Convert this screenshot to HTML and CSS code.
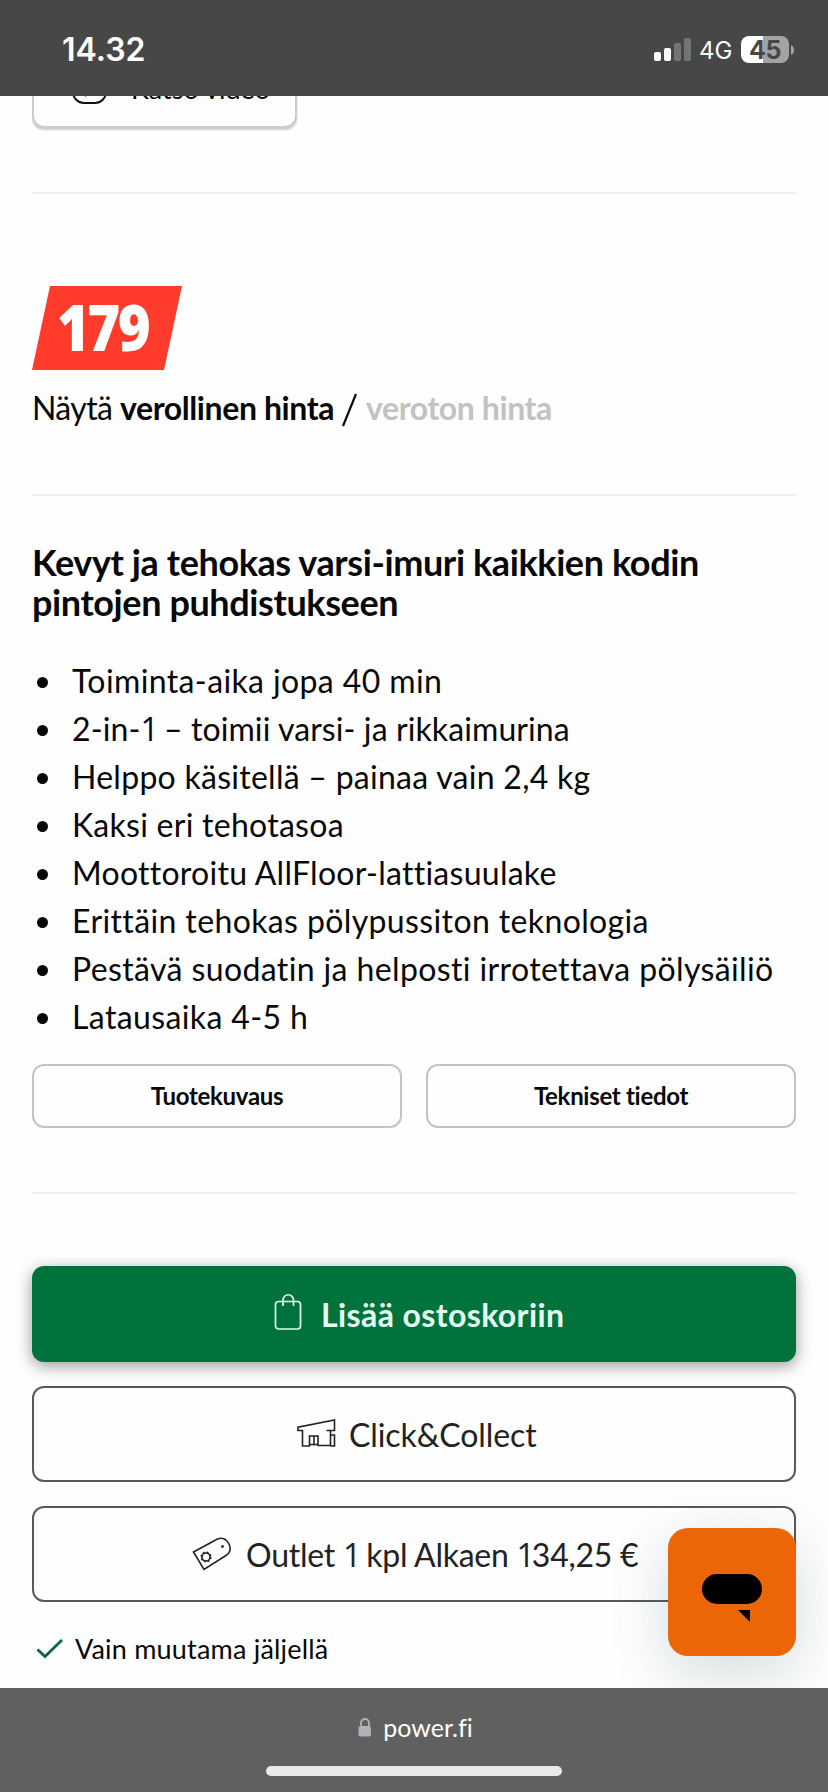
FILE: index.html
```html
<!DOCTYPE html>
<html lang="fi">
<head>
<meta charset="utf-8">
<title>power.fi</title>
<link rel="stylesheet" href="styles.css">
</head>
<body>
<div class="screen">
  <header class="status">
    <span class="time">14.32</span>
    <div class="indicators">
      <svg class="signal" width="37" height="23" viewBox="0 0 37 23"><rect x="0" y="14" width="7" height="9" rx="2" fill="#fff"/><rect x="10" y="10" width="7" height="13" rx="2" fill="#fff"/><rect x="20" y="5" width="7" height="18" rx="2" fill="#737373"/><rect x="30" y="0" width="7" height="23" rx="2" fill="#737373"/></svg>
      <span class="network">4G</span>
      <span class="battery">45</span>
      <svg class="nub" width="3" height="10" viewBox="0 0 3 10"><path d="M0 0Q3 1.5 3 5T0 10Z" fill="#a3a3a3"/></svg>
    </div>
  </header>

  <main class="page">
    <div class="video-clip">
      <button class="video">
        <svg width="36" height="36" viewBox="0 0 36 36" fill="none" stroke="#111" stroke-width="2"><rect x="1" y="1" width="33" height="34" rx="11"/><path d="M14 9v18l11-9z"/></svg>
        <span>Katso video</span>
      </button>
    </div>
    <hr class="rule">
    <section class="price-block">
      <div class="price"><span>179</span></div>
      <p class="tax"><span class="show">Näytä</span><b class="with-tax">verollinen hinta</b><svg width="15" height="34" viewBox="0 0 15 34"><path d="M1 33L14 1" stroke="#080808" stroke-width="2.200"/></svg><b class="no-tax">veroton hinta</b></p>
    </section>
    <hr class="rule">
    <section class="info">
      <h2>Kevyt ja tehokas varsi-imuri kaikkien kodin<br>pintojen puhdistukseen</h2>
      <ul class="features">
        <li><span>Toiminta-aika jopa 40 min</span></li>
        <li class="tightest"><span>2-in-<i class="one">1</i> – toimii varsi- ja rikkaimurina</span></li>
        <li class="tight"><span>Helppo käsitellä – painaa vain 2,4 kg</span></li>
        <li class="tight"><span>Kaksi eri tehotasoa</span></li>
        <li class="tight"><span>Moottoroitu AllFloor-lattiasuulake</span></li>
        <li><span>Erittäin tehokas pölypussiton teknologia</span></li>
        <li><span>Pestävä suodatin ja helposti irrotettava pölysäiliö</span></li>
        <li><span>Latausaika 4-5 h</span></li>
      </ul>
      <div class="tabs"><button>Tuotekuvaus</button><button>Tekniset tiedot</button></div>
    </section>
    <hr class="rule">
    <section class="buy">
      <button class="action cart">
        <svg width="28" height="38" viewBox="0 0 28 38" fill="none" stroke="#dffff0" stroke-width="1.7"><rect x="1.5" y="8.5" width="25" height="27.500" rx="3"/><path d="M9 13V7a5 5 0 0 1 10.500 0v6"/></svg>
        <span>Lisää ostoskoriin</span>
      </button>
      <button class="action collect">
        <svg width="40" height="30" viewBox="0 0 40 30" fill="none" stroke="#222" stroke-width="1.6"><path d="M29.500 12.500h8V2L1 9.200v3.300h4.500V28h7V18h8.500v9.500H33.500V12.500M33.500 17h4v11h-4M17 18v9.500M12.500 26.500h8.500"/></svg>
        <span>Click&amp;Collect</span>
      </button>
      <button class="action outlet">
        <svg width="40" height="36" viewBox="0 0 40 36" fill="none" stroke="#222" stroke-width="1.6"><path d="M1.500 16L25 3.200C30.500 .8 35 3.500 37 8S38 17 34 19.500L12 33.500z"/><circle cx="14" cy="21" r="4"/><circle cx="14" cy="21" r="4.800" stroke-dasharray="1.900 1.870"/><circle cx="30.500" cy="10.500" r="1" fill="#222" stroke-width="1"/></svg>
        <span>Outlet <i class="one">1</i> kpl Alkaen <i class="one">1</i>34,25 €</span>
      </button>
      <p class="stock"><svg width="28" height="22" viewBox="0 0 28 22" fill="none" stroke="#08693f" stroke-width="2.800"><path d="M1.500 11.500l7.500 7L26 2"/></svg><span>Vain muutama jäljellä</span></p>
    </section>
  </main>

  <footer class="browser">
    <div class="address">
      <svg width="14" height="19" viewBox="0 0 14 19"><path d="M3 9V5a4 4 0 0 1 8 0v4" fill="none" stroke="#b1b1b9" stroke-width="1.800"/><rect x="0.500" y="8" width="12.500" height="10.500" rx="2" fill="#b1b1b9"/></svg>
      <span>power.fi</span>
    </div>
    <div class="home"></div>
  </footer>

  <button class="chat"><svg width="60" height="49" viewBox="0 0 60 49"><rect width="60" height="30" rx="15"/><path d="M36 36h12v12z"/></svg></button>
</div>
</body>
</html>
```
FILE: styles.css
```css
* { box-sizing: border-box; }
body { margin: 0; background: #fefefe; font-family: Lato, "Open Sans", sans-serif; color: #080808; font-variant-ligatures: none; }
button { font: inherit; color: inherit; margin: 0; padding: 0; background: #fefefe; font-variant-ligatures: none; }
svg { display: block; flex: none; }
p, h2, ul { margin: 0; padding: 0; white-space: nowrap; }
.screen { position: relative; width: 828px; height: 1792px; overflow: hidden; display: flex; flex-direction: column; background: #fefefe; }
.one { font-family: "Open Sans", sans-serif; font-style: normal; font-weight: 400; letter-spacing: -3px; }

.status { height: 96px; flex: none; background: #474747; color: #fff; font-family: Inter, sans-serif; display: flex; justify-content: space-between; padding: 0 34px 0 62px; }
.time { font-size: 32px; font-weight: 600; line-height: 40px; margin-top: 30px; letter-spacing: 0; }
.indicators { display: flex; align-items: center; height: 99px; }
.signal { margin-right: 8px; }
.network { width: 34px; margin-right: 8px; font-size: 24px; line-height: 30px; margin-top: 2px; }
.battery { width: 48px; height: 27px; border-radius: 8px; background: linear-gradient(90deg, #fff 22px, #a3a3a3 22px); color: #474747; font-size: 25px; font-weight: 700; line-height: 28px; text-align: center; letter-spacing: -0.5px; }
.nub { margin-left: 2px; }

.page { height: 1592px; flex: none; padding: 0 32px; }
.rule { border: 0; height: 2px; margin: 0; background: #f0f0f0; }

.video-clip { height: 96px; overflow: hidden; }
.video { display: flex; align-items: center; width: 265px; height: 96px; margin-top: -64px; padding-left: 38px; gap: 23px; border: 2px solid #ccc; border-radius: 12px; box-shadow: 0 2px 2px #ccc; font-size: 27px; }
.video svg { margin-top: 12px; }
.video span { margin-top: 16px; }

.price-block { height: 300px; padding-top: 92px; }
.price { width: 150px; height: 84px; background: #ff3b2b; clip-path: polygon(18px 0, 100% 0, 132px 100%, 0 100%); color: #fff; font-family: "Open Sans", sans-serif; font-size: 64px; font-weight: 800; line-height: 81px; padding-left: 25px; letter-spacing: -3px; }
.price span { display: inline-block; transform: scaleX(.88); transform-origin: left; }
.tax { display: flex; align-items: center; height: 40px; margin-top: 18px; font-size: 32px; line-height: 40px; }
.tax b { font-weight: 700; letter-spacing: -0.4px; }
.show { width: 88px; letter-spacing: -0.6px; }
.with-tax { width: 222px; }
.tax svg { margin: 3px 9px 0 0; }
.tax .no-tax { color: #c2c2c2; }

.info { height: 696px; padding-top: 46px; }
h2 { font-size: 36px; line-height: 40px; font-weight: 700; letter-spacing: -0.4px; }
.features { list-style: none; margin-top: 35px; font-size: 32px; line-height: 48px; letter-spacing: 0.38px; }
.features .tight { letter-spacing: 0.27px; }
.features .tightest { letter-spacing: 0.1px; }
.features li { display: flex; align-items: center; height: 48px; }
.features li::before { content: ""; width: 11px; height: 11px; margin: 3px 24px 0 5px; border-radius: 50%; background: #080808; }
.tabs { display: grid; grid-template-columns: 1fr 1fr; gap: 24px; margin-top: 23px; }
.tabs button { height: 64px; border: 2px solid #c3c3c3; border-radius: 12px; font-size: 24px; font-weight: 700; letter-spacing: -0.3px; padding-bottom: 2px; }

.buy { padding-top: 72px; }
.action { display: flex; align-items: center; width: 100%; height: 96px; margin-bottom: 24px; border: 2px solid #59595b; border-radius: 12px; color: #222; font-size: 32px; white-space: nowrap; }
.cart { padding-left: 240px; gap: 19px; background: #00733d; border-color: #00733d; color: #e6fff4; font-weight: 700; letter-spacing: 0.4px; box-shadow: 0 4px 16px rgba(0,0,0,.4); }
.cart svg { margin-top: -4px; }
.collect { padding-left: 263px; gap: 12px; letter-spacing: -0.1px; }
.collect svg { margin-top: -2px; }
.outlet { padding-left: 158px; gap: 14px; letter-spacing: -0.25px; }
.stock { display: flex; align-items: center; gap: 11px; padding-left: 4px; margin-top: -1px; font-size: 27px; line-height: 48px; letter-spacing: 0.2px; }

.browser { height: 104px; background: #606060; color: #fff; display: flex; flex-direction: column; align-items: center; position: relative; }
.address { display: flex; align-items: center; gap: 11px; height: 78px; font-size: 25px; padding-left: 3px; }
.home { width: 296px; height: 10px; border-radius: 5px; background: #e9e9e9; }

.chat { position: absolute; left: 668px; top: 1528px; width: 128px; height: 128px; border: 0; border-radius: 20px; background: #ec6608; padding: 46px 34px; box-shadow: 0 16px 60px rgba(40,80,90,.2); clip-path: inset(-80px -80px -32px -80px); }
```
